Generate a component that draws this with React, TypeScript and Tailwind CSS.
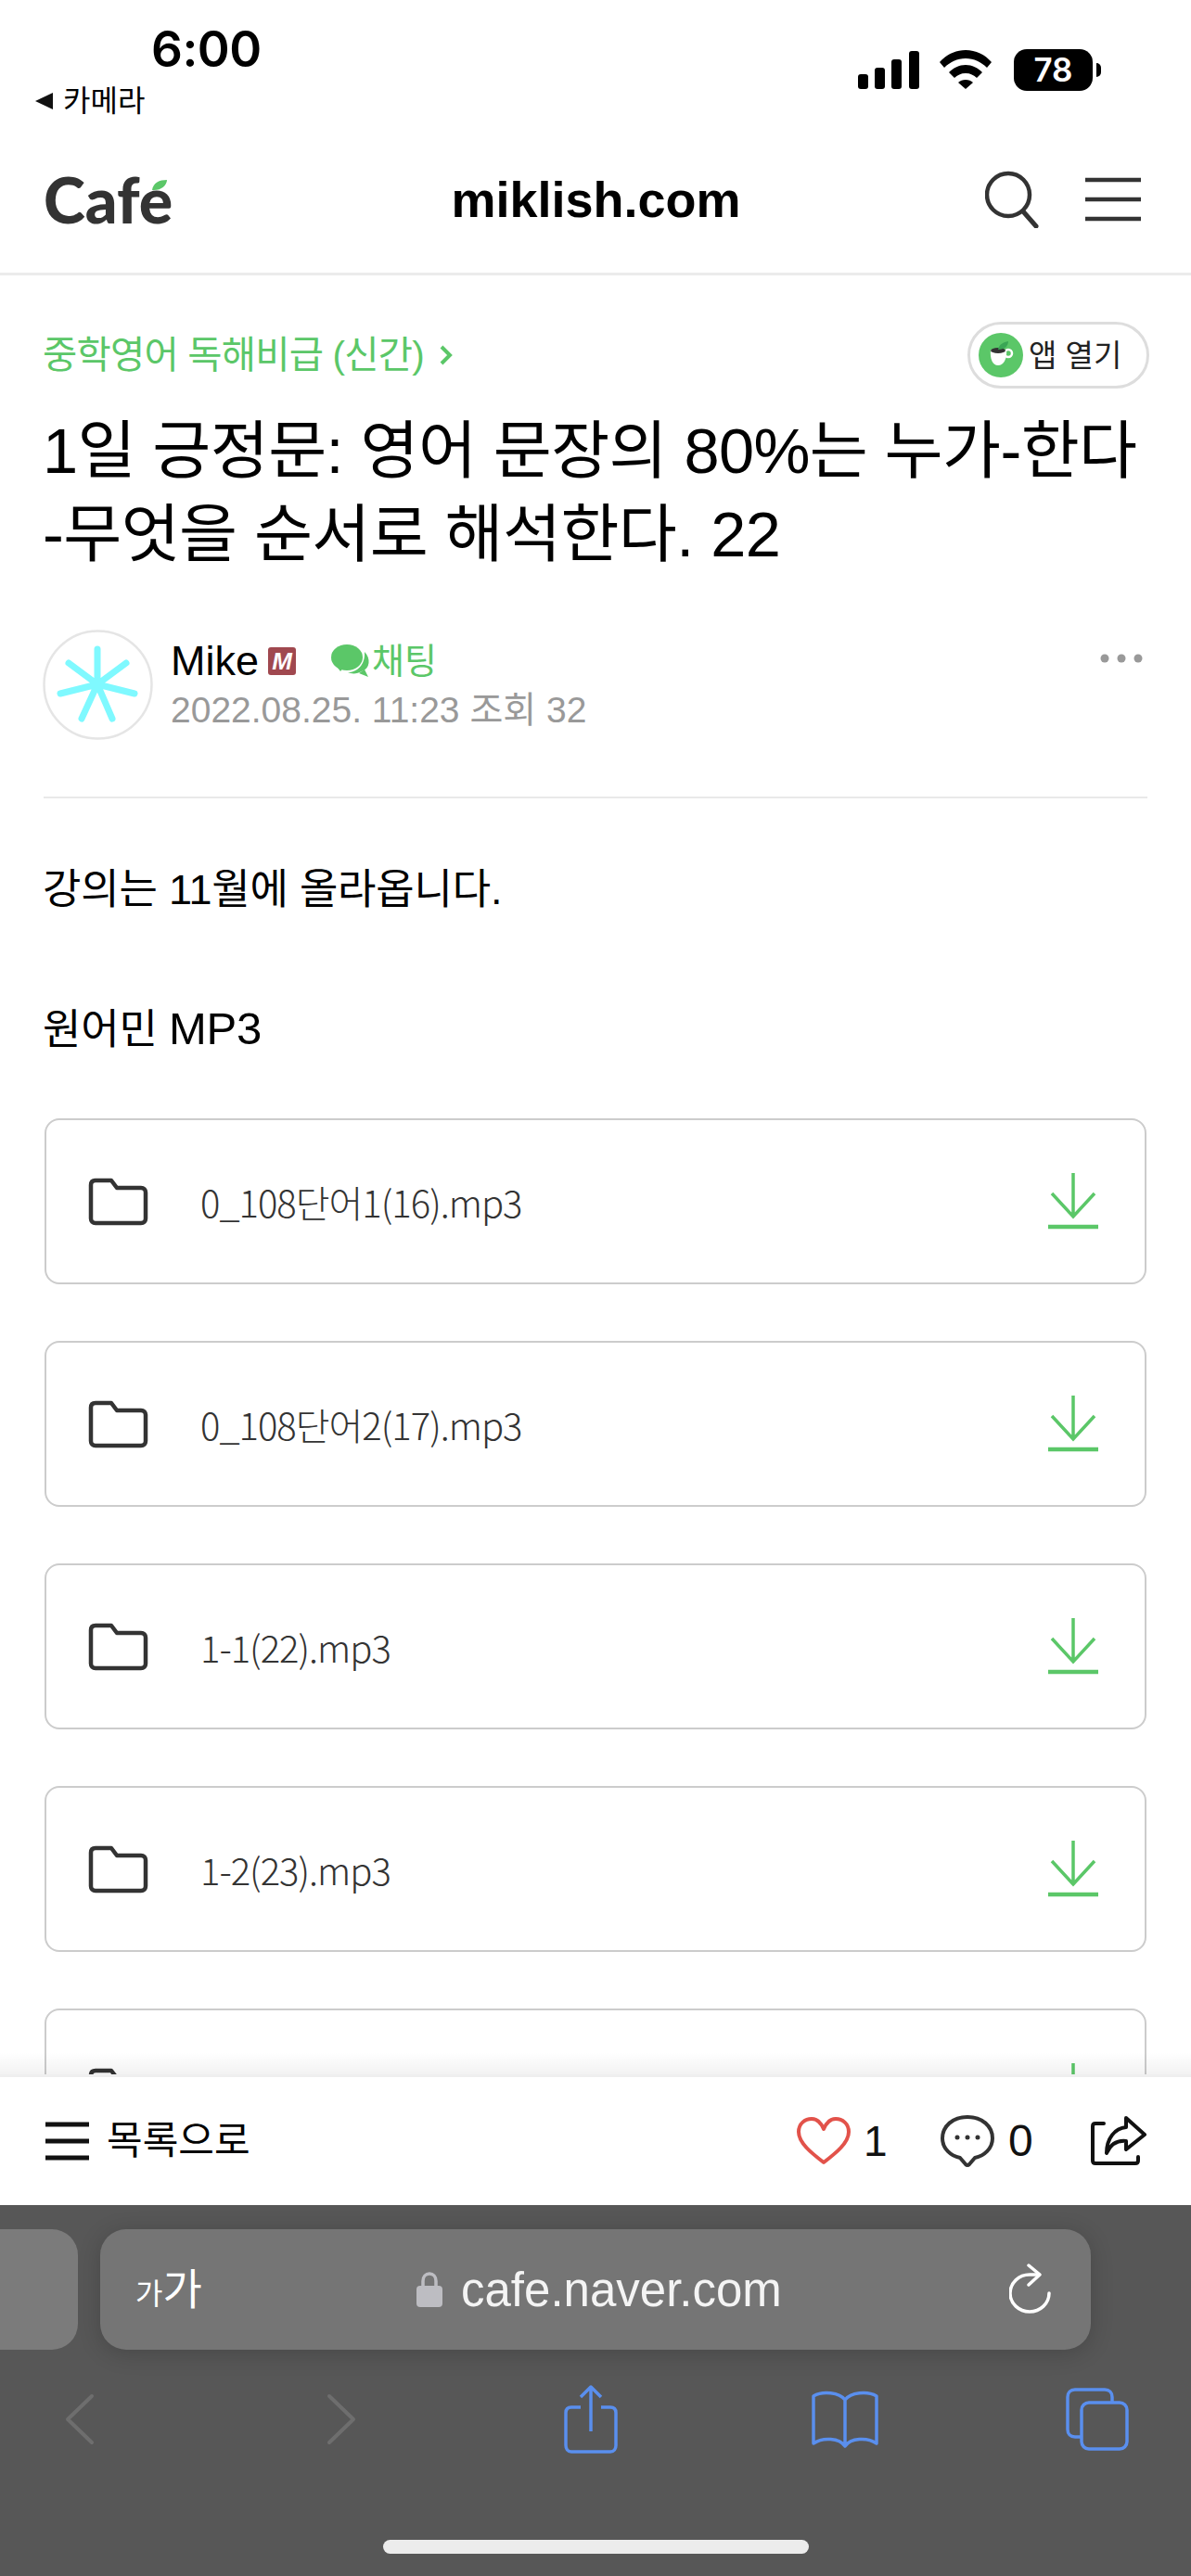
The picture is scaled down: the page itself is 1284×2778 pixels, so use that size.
import type { ReactNode } from "react";

const KR = "font-['Liberation_Sans','Noto_Sans_CJK_KR',sans-serif]";

const files = ["0_108단어1(16).mp3", "0_108단어2(17).mp3", "1-1(22).mp3", "1-2(23).mp3", ""];

function Icon({ w, h, children, className }: { w: number; h: number; children: ReactNode; className?: string }) {
  return (
    <svg width={w} height={h} viewBox={`0 0 ${w} ${h}`} fill="none" className={className}>
      {children}
    </svg>
  );
}

function StatusBar() {
  return (
    <div className="flex h-[130px] shrink-0 justify-between pl-[37px] pr-[97px]">
      <div>
        <div className="pl-[126px] pt-[25px] font-['Inter',sans-serif] text-[53px] font-semibold leading-[56px] tracking-[-0.5px] text-black">
          6:00
        </div>
        <div className="mt-[9px] flex items-center gap-[10px]">
          <svg width="21" height="20" viewBox="0 0 21 20">
            <path d="M20 1 V19 L1 10 Z" fill="#111" />
          </svg>
          <span className="text-[32px] leading-[38px] text-black">카메라</span>
        </div>
      </div>
      <div className="flex items-start pt-[53px]">
        <Icon w={66} h={44}>
          <rect x="0" y="27" width="11" height="16" rx="3" fill="#000" />
          <rect x="18" y="20" width="11" height="23" rx="3" fill="#000" />
          <rect x="36" y="11" width="11" height="32" rx="3" fill="#000" />
          <rect x="55" y="2" width="11" height="41" rx="3" fill="#000" />
        </Icon>
        <Icon w={58} h={44} className="ml-[21px]">
          <path d="M29 1 C40 1 50 6 57 14 L52 20 C46 14 38 10 29 10 C20 10 12 14 6 20 L1 14 C8 6 18 1 29 1 Z" fill="#000" />
          <path d="M29 17 C36 17 42 20 47 25 L41 31 C38 28 34 26 29 26 C24 26 20 28 17 31 L11 25 C16 20 22 17 29 17 Z" fill="#000" />
          <path d="M29 33 C32 33 35 34 37 36 L29 43 L21 36 C23 34 26 33 29 33 Z" fill="#000" />
        </Icon>
        <div className="ml-[23px] flex items-center gap-[4px]">
          <div className="flex h-[45px] w-[85px] items-center justify-center rounded-[14px] bg-black font-['Inter',sans-serif] text-[35px] font-semibold leading-none text-white">
            78
          </div>
          <div className="h-[15px] w-[5px] rounded-r-full bg-black" />
        </div>
      </div>
    </div>
  );
}

function Header() {
  return (
    <div className="flex h-[167px] shrink-0 items-center justify-between border-b-[3px] border-[#ebebeb] pl-[47px] pr-[54px] pt-[6px]">
      <div className="relative w-[142px] font-['Lato',sans-serif] text-[68px] font-black leading-[64px] text-[#333]">
        Cafe
        <svg width="18" height="13" viewBox="0 0 18 13" className="absolute right-[8px] top-[10px]">
          <path d="M1 12 C2 4 9 1 17 1 C17 7 10 13 1 12 Z" fill="#5bc768" />
        </svg>
      </div>
      <div className="ml-[34px] text-[54px] font-bold leading-none text-black">miklish.com</div>
      <div className="flex items-center gap-[50px]">
        <Icon w={58} h={62}>
          <circle cx="25" cy="26" r="23" stroke="#333" strokeWidth="4.5" />
          <path d="M41 44 L55 60" stroke="#333" strokeWidth="5" strokeLinecap="round" />
        </Icon>
        <Icon w={60} h={48}>
          <path d="M0 3 H60 M0 24 H60 M0 45 H60" stroke="#333" strokeWidth="4.5" />
        </Icon>
      </div>
    </div>
  );
}

function FileCard({ name }: { name: string }) {
  return (
    <div className="mx-[2px] flex h-[179px] shrink-0 items-center justify-between rounded-[16px] border-[2.5px] border-[#ccc] pl-[45px] pr-[50px]">
      <div className="flex items-center gap-[56px]">
        <Icon w={65} h={52}>
          <path
            d="M3 8 C3 4 5 3 8 3 H25 L31 11 H57 C60 11 62 13 62 16 V44 C62 47 60 49 57 49 H8 C5 49 3 47 3 44 Z"
            stroke="#333"
            strokeWidth="4.5"
            strokeLinejoin="round"
          />
        </Icon>
        <span className="font-['Noto_Sans_CJK_KR',sans-serif] text-[40px] font-light leading-none tracking-[-1px] text-[#333]">
          {name}
        </span>
      </div>
      <Icon w={54} h={62}>
        <path d="M27 0 V46 M4 22 L27 47 L50 22" stroke="#5bc768" strokeWidth="3.5" />
        <path d="M0 58 H54" stroke="#5bc768" strokeWidth="4.5" />
      </Icon>
    </div>
  );
}

function Article() {
  return (
    <div className="relative min-h-0 flex-1 overflow-hidden">
      <div className="px-[46px] pt-[50px]">
        <div className="flex items-center justify-between">
          <div className="flex items-center gap-[17px] text-[40.5px] leading-none tracking-[-0.8px] text-[#5bc768]">
            <span>중학영어 독해비급 (신간)</span>
            <svg width="14" height="24" viewBox="0 0 14 24" fill="none">
              <path d="M2 3 L11 12 L2 21" stroke="#5bc768" strokeWidth="4" />
            </svg>
          </div>
          <div className="mr-[-1px] flex h-[72px] w-[196px] items-center gap-[6px] rounded-full border-[3px] border-[#ddd] pl-[9px]">
            <svg width="48" height="48" viewBox="0 0 48 48" fill="none">
              <circle cx="24" cy="24" r="24" fill="#5bc768" />
              <path d="M13 18 H30 C31 28 27 35 21 35 C15 35 12 28 13 18 Z" fill="#fff" />
              <circle cx="32" cy="22" r="4" stroke="#fff" strokeWidth="2.5" />
              <ellipse cx="21" cy="19" rx="8" ry="3" fill="#333" />
              <path d="M21 18 C22 12 27 10 32 9 C32 14 28 18 21 18 Z" fill="#3aa655" />
            </svg>
            <span className="text-[33px] leading-none text-[#222]">앱 열기</span>
          </div>
        </div>
        <h1 className="mt-[23px] whitespace-nowrap text-[68.5px] font-normal leading-[90px] tracking-[-0.6px] text-black">
          1일 긍정문: 영어 문장의 80%는 누가-한다
          <br />
          -무엇을 순서로 해석한다. 22
        </h1>
        <div className="mt-[57px] flex items-start">
          <svg width="119" height="119" viewBox="0 0 119 119" fill="none" className="shrink-0">
            <circle cx="59.5" cy="59.5" r="58" stroke="#e5e5e5" strokeWidth="2.5" />
            <path
              d="M59 59 L59 21 M59 59 L90 36 M59 59 L99 69 M59 59 L75 96 M59 59 L42 96 M59 59 L19 69 M59 59 L28 36"
              stroke="#7ff9ff"
              strokeWidth="7"
              strokeLinecap="round"
            />
          </svg>
          <div className="ml-[19px] min-w-0 flex-1">
            <div className="flex h-[66px] items-center justify-between pt-[1px]">
              <div className="flex items-center">
                <span className="text-[45px] leading-none text-black">Mike</span>
                <span className="ml-[10px] flex h-[30px] w-[30px] items-center justify-center rounded-[3px] bg-[#a0484f] text-[26px] font-bold italic leading-none text-white">
                  M
                </span>
                <svg width="44" height="38" viewBox="0 0 44 38" className="ml-[38px]">
                  <path d="M16 23 L10 30 L7 26 Z M36 28 L40 36 L30 32 Z" fill="#5bc768" />
                  <ellipse cx="17" cy="15" rx="17" ry="14" fill="#5bc768" />
                  <path d="M36 9 C43 16 42 27 33 30 C28 33 22 33 18 31 C28 31 37 23 36 9 Z" fill="#5bc768" />
                </svg>
                <span className="text-[38px] leading-none text-[#5bc768]">채팅</span>
              </div>
              <svg width="46" height="10" viewBox="0 0 46 10" className="mb-[6px] mr-[6px]">
                <circle cx="5" cy="5" r="4.5" fill="#999" />
                <circle cx="23" cy="5" r="4.5" fill="#999" />
                <circle cx="41" cy="5" r="4.5" fill="#999" />
              </svg>
            </div>
            <div className="mt-[-2px] text-[39px] leading-[46px] text-[#999]">2022.08.25. 11:23 조회 32</div>
          </div>
        </div>
        <div className="mx-[1px] mt-[61px] h-[2px] bg-[#e9e9e9]" />
        <p className="mt-[73px] text-[45px] leading-[52px] tracking-[-0.2px] text-black">강의는 11월에 올라옵니다.</p>
        <p className="mt-[97px] text-[45px] leading-[52px] tracking-[-0.2px] text-black">
          원어민 <span className="text-[49px]">MP3</span>
        </p>
        <div className="mt-[69px] flex flex-col gap-[61px]">
          {files.map((name, i) => (
            <FileCard key={i} name={name} />
          ))}
        </div>
      </div>
      <div className="absolute inset-x-0 bottom-0 h-[24px] bg-gradient-to-b from-transparent to-black/5" />
    </div>
  );
}

function BottomBar() {
  return (
    <div className="flex h-[141px] shrink-0 items-center justify-between border-t-[3px] border-[#efefef] bg-white pl-[49px] pr-[48px]">
      <div className="flex items-center gap-[19px]">
        <Icon w={47} h={44}>
          <path d="M0 4 H47 M0 22 H47 M0 40 H47" stroke="#111" strokeWidth="5" />
        </Icon>
        <span className="text-[42px] leading-none text-black">목록으로</span>
      </div>
      <div className="flex items-center">
        <Icon w={58} h={52}>
          <path
            d="M29 49 C16 39 2 28 2 16 C2 7 9 2 16 2 C22 2 26 6 29 13 C32 6 36 2 42 2 C49 2 56 7 56 16 C56 28 42 39 29 49 Z"
            stroke="#e2524a"
            strokeWidth="4"
            strokeLinejoin="round"
          />
        </Icon>
        <span className="ml-[14px] w-[24px] text-[46px] leading-none text-[#111]">1</span>
        <Icon w={58} h={56} className="ml-[59px]">
          <path
            d="M29 2 C45 2 56 12 56 25 C56 36 47 44 37 46 L31 53 Q29 55 27 53 L21 46 C11 44 2 36 2 25 C2 12 13 2 29 2 Z"
            stroke="#333"
            strokeWidth="4"
            strokeLinejoin="round"
          />
          <circle cx="18" cy="24" r="2.5" fill="#333" />
          <circle cx="29" cy="24" r="2.5" fill="#333" />
          <circle cx="40" cy="24" r="2.5" fill="#333" />
        </Icon>
        <span className="ml-[15px] w-[27px] text-[48px] leading-none text-[#111]">0</span>
        <Icon w={60} h={54} className="ml-[62px]">
          <path d="M14 8 H5 Q2 8 2 11 V48 Q2 51 5 51 H48 Q51 51 51 48 V44" stroke="#111" strokeWidth="4" strokeLinecap="round" />
          <path
            d="M38 2 L58 20 L38 36 V27 C28 26 21 31 17 40 C17 24 26 13 38 12 Z"
            stroke="#111"
            strokeWidth="4"
            strokeLinejoin="round"
          />
        </Icon>
      </div>
    </div>
  );
}

function SafariBar() {
  return (
    <div className="flex h-[400px] shrink-0 flex-col bg-[#575757]">
      <div className="flex gap-[24px] pt-[26px]">
        <div className="h-[130px] w-[84px] shrink-0 rounded-r-[28px] bg-[#7b7b7b]" />
        <div className="flex h-[130px] w-[1068px] items-center rounded-[28px] bg-[#757575] pl-[38px] pr-[42px] shadow-[0_4px_24px_rgba(0,0,0,0.18)]">
          <div className="flex w-[303px] items-baseline text-white">
            <span className="text-[32px] leading-none">가</span>
            <span className="text-[46px] leading-none">가</span>
          </div>
          <svg width="28" height="38" viewBox="0 0 28 38" fill="none">
            <path d="M7 18 V10 C7 5 10 2 14 2 C18 2 21 5 21 10 V18" stroke="#bdbdc2" strokeWidth="3.5" />
            <rect x="0" y="15" width="28" height="23" rx="4" fill="#bdbdc2" />
          </svg>
          <span className="ml-[20px] text-[51px] leading-none text-[#f4f4f4]">cafe.naver.com</span>
          <svg width="46" height="56" viewBox="0 0 46 56" fill="none" className="ml-auto">
            <path d="M43 32 A21 20 0 1 1 22 12 H32" stroke="#fff" strokeWidth="3.5" strokeLinecap="round" />
            <path d="M21 2 L33 12 L21 23" stroke="#fff" strokeWidth="3.5" strokeLinecap="round" strokeLinejoin="round" />
          </svg>
        </div>
      </div>
      <div className="mt-[38px] flex items-center pl-[70px]">
        <svg width="32" height="56" viewBox="0 0 32 56" fill="none">
          <path d="M29 3 L3 28 L29 53" stroke="#6e6e6e" strokeWidth="4" strokeLinecap="round" strokeLinejoin="round" />
        </svg>
        <svg width="32" height="56" viewBox="0 0 32 56" fill="none" className="ml-[250px]">
          <path d="M3 3 L29 28 L3 53" stroke="#6e6e6e" strokeWidth="4" strokeLinecap="round" strokeLinejoin="round" />
        </svg>
        <svg width="58" height="74" viewBox="0 0 58 74" fill="none" className="ml-[224px]">
          <path d="M18 24 H8 C4 24 2 26 2 30 V65 C2 69 4 72 8 72 H50 C54 72 56 69 56 65 V30 C56 26 54 24 50 24 H40" stroke="#5a8fee" strokeWidth="3.5" />
          <path d="M29 2 V50 M18 13 L29 2 L40 13" stroke="#5a8fee" strokeWidth="3.5" strokeLinejoin="round" />
        </svg>
        <svg width="72" height="62" viewBox="0 0 72 62" fill="none" className="ml-[209px]">
          <path d="M36 10 C30 2 12 0 2 6 V57 C12 50 30 51 36 60 C42 51 60 50 70 57 V6 C60 0 42 2 36 10 Z M36 10 V60" stroke="#5a8fee" strokeWidth="3.5" strokeLinejoin="round" />
        </svg>
        <svg width="68" height="68" viewBox="0 0 68 68" fill="none" className="ml-[202px]">
          <path d="M16 53 H10 C5 53 2 50 2 45 V10 C2 5 5 2 10 2 H42 C47 2 50 5 50 10 V16" stroke="#5a8fee" strokeWidth="3.5" />
          <rect x="17" y="16" width="49" height="50" rx="8" stroke="#5a8fee" strokeWidth="3.5" />
        </svg>
      </div>
      <div className="mt-auto mb-[24px] ml-[413px] h-[15px] w-[459px] rounded-full bg-[#ececec]" />
    </div>
  );
}

export default function App() {
  return (
    <div className={`flex h-[2778px] w-[1284px] flex-col overflow-hidden bg-white ${KR}`}>
      <StatusBar />
      <Header />
      <Article />
      <BottomBar />
      <SafariBar />
    </div>
  );
}
